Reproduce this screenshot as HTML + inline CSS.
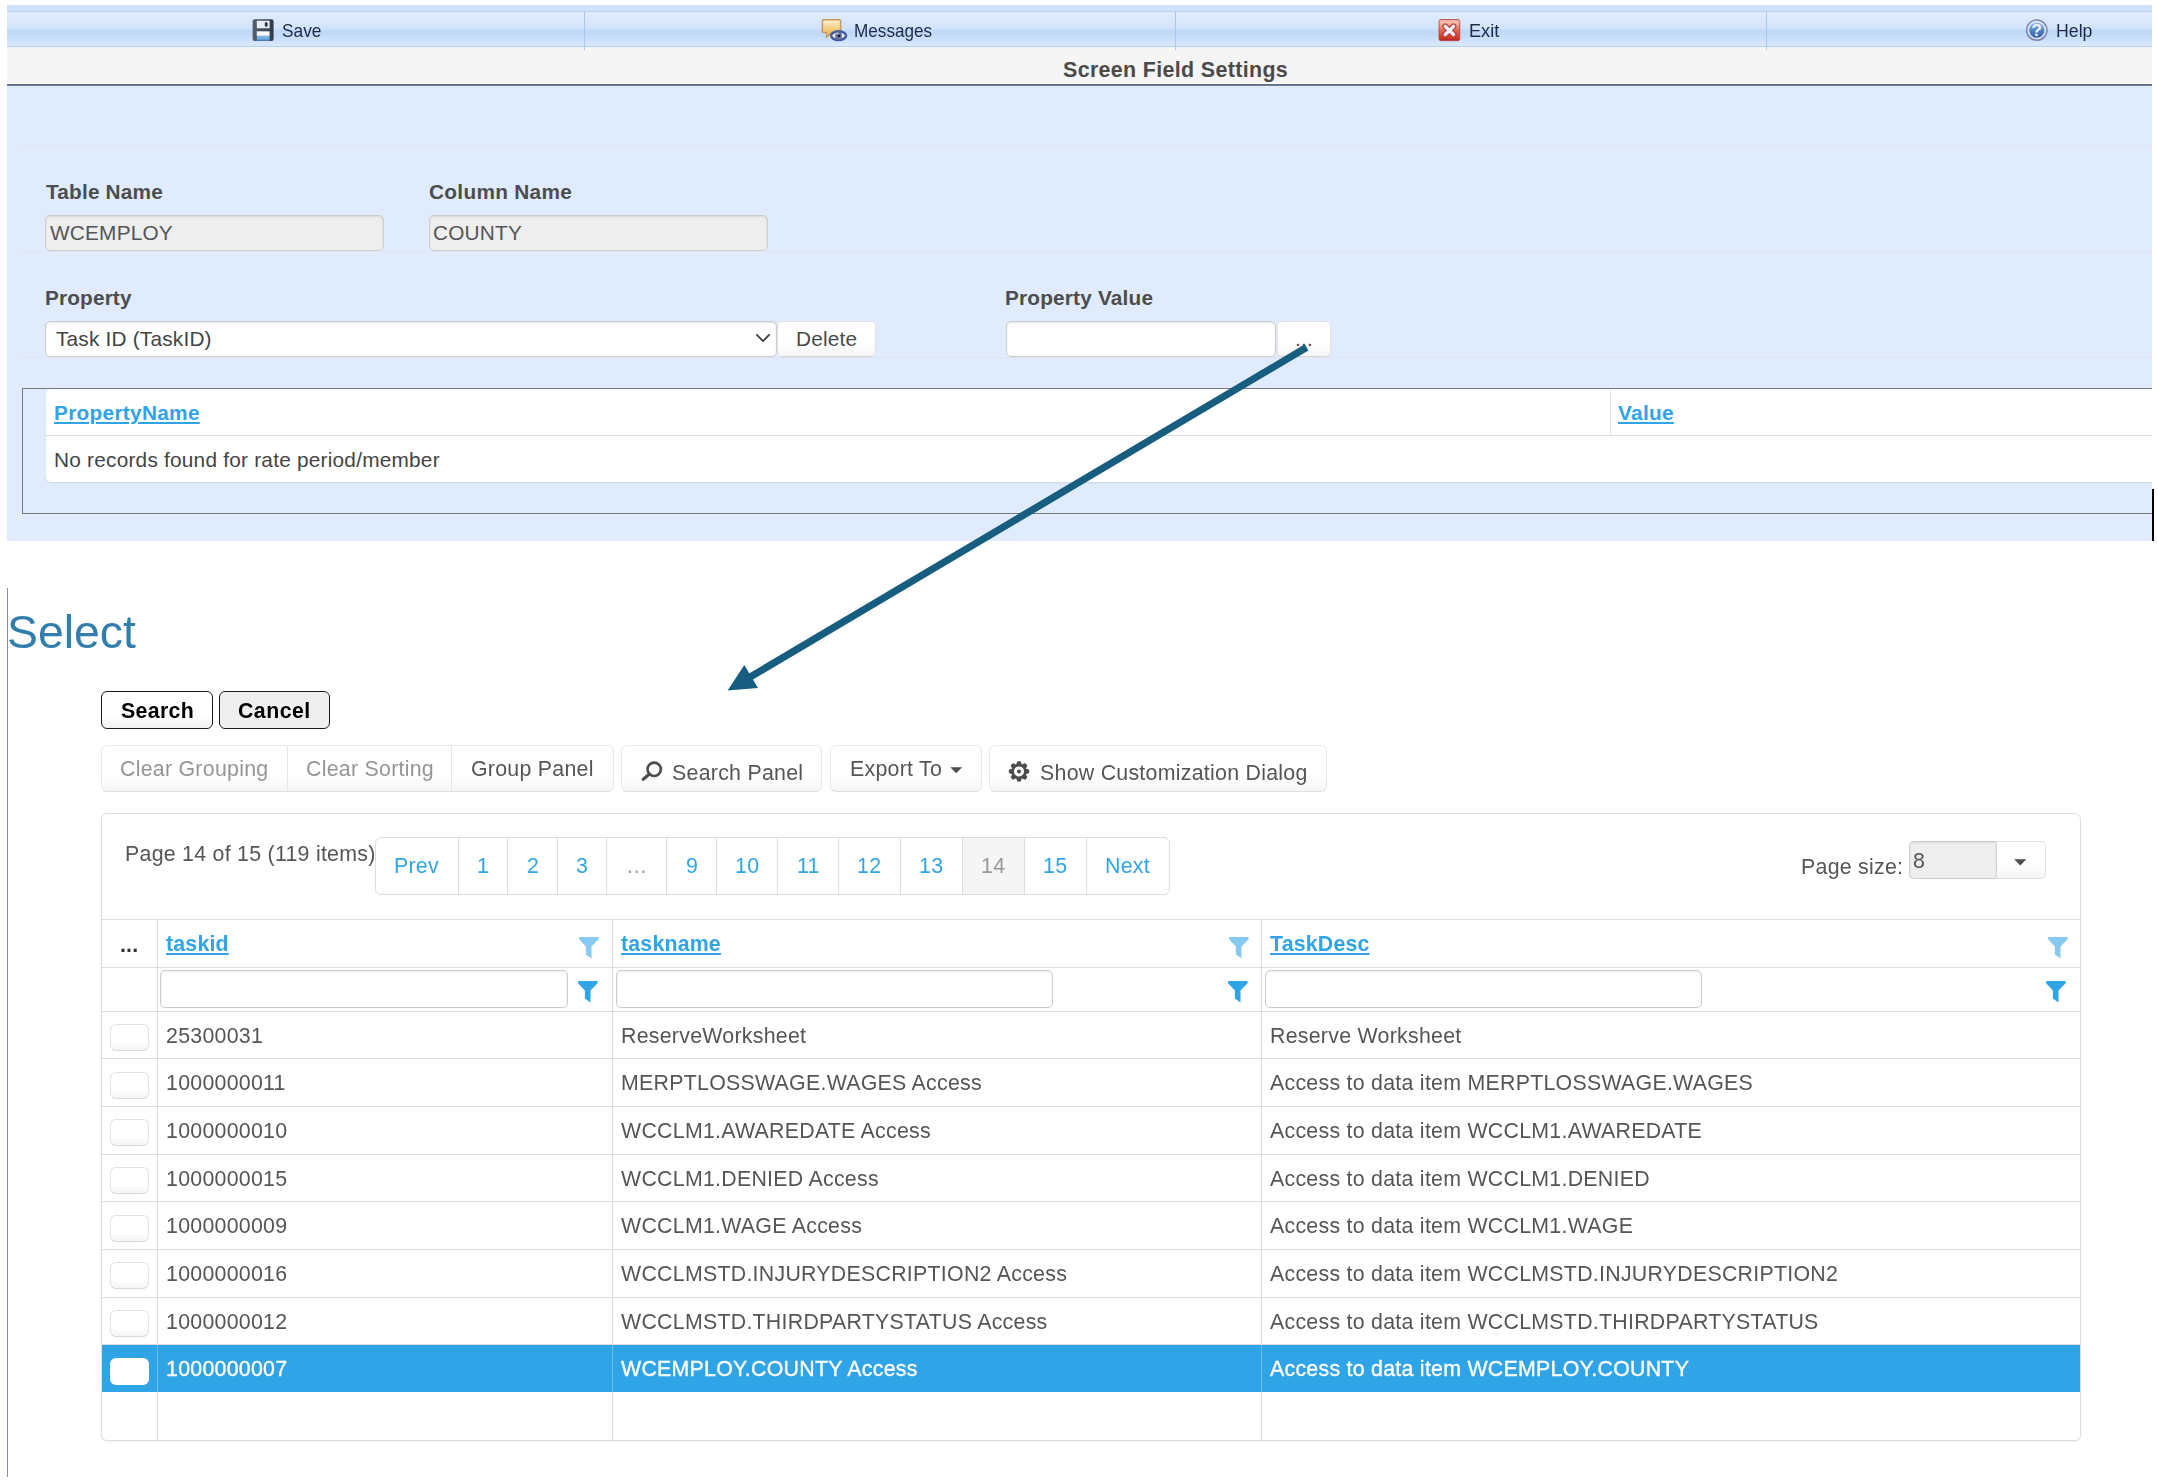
<!DOCTYPE html><html><head><meta charset="utf-8"><title>Screen Field Settings</title><style>
html,body{margin:0;padding:0;background:#fff;}
html{overflow:hidden;width:2157px;height:1480px;}
body{width:2157px;height:1480px;position:relative;overflow:hidden;font-family:"Liberation Sans",sans-serif;}
div{position:absolute;box-sizing:border-box;}
.t{white-space:nowrap;}
svg{position:absolute;overflow:visible;}
.u{text-decoration:underline;text-decoration-thickness:1.6px;text-underline-offset:2.2px;}
</style></head><body>
<div style="left:7px;top:5px;width:2145px;height:6px;background:#cfe2fb;"></div>
<div style="left:7px;top:11px;width:2145px;height:1px;background:#b6d1f5;"></div>
<div style="left:7px;top:12px;width:2145px;height:34px;background:linear-gradient(to bottom,#e1edfd 0%,#dae8fc 25%,#d0e3fb 50%,#bfd9f7 53%,#c1daf8 65%,#d0e2fa 85%,#dbe9fc 100%);"></div>
<div style="left:7px;top:46px;width:2145px;height:1px;background:#b4d0f4;"></div>
<div style="left:7px;top:47px;width:2145px;height:37px;background:#f5f5f5;"></div>
<div style="left:7px;top:83px;width:2145px;height:1px;background:#fdfdfd;"></div>
<div style="left:7px;top:84px;width:2145px;height:2px;background:linear-gradient(to bottom,#4f6179,#7b8fa6);"></div>
<div style="left:7px;top:86px;width:2145px;height:455px;background:#e0ecfd;"></div>
<div style="left:584px;top:12px;width:1px;height:38px;background:#a9c8f0;"></div>
<div style="left:1175px;top:12px;width:1px;height:38px;background:#a9c8f0;"></div>
<div style="left:1766px;top:12px;width:1px;height:38px;background:#a9c8f0;"></div>
<svg style="left:252px;top:19px" width="22" height="22" viewBox="0 0 22 22">
<defs><linearGradient id="sv1" x1="0" y1="0" x2="1" y2="0"><stop offset="0" stop-color="#566170"/><stop offset="0.25" stop-color="#4a5565"/><stop offset="1" stop-color="#2f3a4b"/></linearGradient>
<linearGradient id="sv2" x1="0" y1="0" x2="0" y2="1"><stop offset="0" stop-color="#86bce6"/><stop offset="0.6" stop-color="#6ca8dc"/><stop offset="1" stop-color="#4a78bf"/></linearGradient></defs>
<rect x="0.6" y="0.3" width="21" height="21.6" rx="2.2" fill="url(#sv1)"/>
<rect x="4.8" y="1.7" width="12.8" height="7.6" fill="#e9edf6"/>
<rect x="12.8" y="3.2" width="2.8" height="4.6" rx="1.2" fill="#2b303c"/>
<rect x="4.8" y="12.3" width="12.8" height="4.6" fill="#f8f9fc"/>
<rect x="4.8" y="16.8" width="12.8" height="5.1" fill="url(#sv2)"/>
</svg>
<div class="t" style="left:282px;top:22px;font-size:18.6px;line-height:18.6px;height:18.6px;color:#1e2b45;transform:scaleX(0.93);transform-origin:0 0;">Save</div>
<svg style="left:822px;top:19px" width="26" height="23" viewBox="0 0 26 23">
<defs><linearGradient id="mg1" x1="0" y1="0" x2="0" y2="1"><stop offset="0" stop-color="#fef3d8"/><stop offset="0.5" stop-color="#f2cd7c"/><stop offset="1" stop-color="#ecbb58"/></linearGradient>
<radialGradient id="mg2" cx="0.5" cy="0.5" r="0.5"><stop offset="0" stop-color="#20242c"/><stop offset="0.22" stop-color="#5a6a8c"/><stop offset="0.45" stop-color="#e8ebf4"/><stop offset="0.7" stop-color="#8f9cc6"/><stop offset="1" stop-color="#40539a"/></radialGradient></defs>
<path d="M1.6 0.8 H17.4 Q18.6 0.8 18.6 2 V12.4 Q18.6 13.6 17.4 13.6 H9.5 L4.6 18.2 V13.6 H1.6 Q0.4 13.6 0.4 12.4 V2 Q0.4 0.8 1.6 0.8 Z" fill="url(#mg1)" stroke="#c9995a" stroke-width="1.5"/>
<g style="filter:blur(0.45px)"><ellipse cx="16.6" cy="16.7" rx="8.6" ry="5.6" fill="#44569e"/>
<ellipse cx="16.6" cy="16.6" rx="6.2" ry="3.1" fill="#e6e9f3"/>
<ellipse cx="16.6" cy="16.7" rx="3.3" ry="4.5" fill="#5f6f92"/>
<ellipse cx="15.4" cy="14.6" rx="1.4" ry="1.0" fill="#a7c3d2"/>
<circle cx="16.9" cy="16.9" r="1.15" fill="#12151b"/></g>
</svg>
<div class="t" style="left:854px;top:22px;font-size:18.6px;line-height:18.6px;height:18.6px;color:#1e2b45;transform:scaleX(0.922);transform-origin:0 0;">Messages</div>
<svg style="left:1438px;top:19px" width="23" height="22" viewBox="0 0 23 22">
<defs><linearGradient id="ex1" x1="0" y1="0" x2="0" y2="1"><stop offset="0" stop-color="#e49a92"/><stop offset="0.12" stop-color="#f6c4b0"/><stop offset="0.5" stop-color="#e06850"/><stop offset="0.9" stop-color="#cf3424"/><stop offset="1" stop-color="#a8202a"/></linearGradient></defs>
<rect x="1.0" y="0.5" width="20.8" height="21.2" rx="2" fill="url(#ex1)" stroke="#c0403c" stroke-width="0.8"/>
<path d="M7.3 7.3 L15.5 15.5 M15.5 7.3 L7.3 15.5" stroke="#b84040" stroke-width="5.8" stroke-linecap="round"/>
<path d="M7.3 7.3 L15.5 15.5 M15.5 7.3 L7.3 15.5" stroke="#eef0f8" stroke-width="3.3" stroke-linecap="round"/>
</svg>
<div class="t" style="left:1469px;top:22px;font-size:18.6px;line-height:18.6px;height:18.6px;color:#1e2b45;transform:scaleX(0.975);transform-origin:0 0;">Exit</div>
<svg style="left:2025px;top:19px" width="23" height="23" viewBox="0 0 23 23">
<defs><linearGradient id="hp1" x1="0" y1="0" x2="0" y2="1"><stop offset="0" stop-color="#9cc4e6"/><stop offset="0.5" stop-color="#5486c8"/><stop offset="1" stop-color="#3558ae"/></linearGradient></defs>
<circle cx="11.8" cy="11.2" r="10.9" fill="#7d89b6"/>
<circle cx="11.8" cy="11.0" r="9.3" fill="#e3e8f5"/>
<circle cx="11.8" cy="11.1" r="7.7" fill="url(#hp1)"/>
<text x="11.8" y="17.2" text-anchor="middle" font-family="Liberation Sans" font-weight="700" font-size="17" fill="#f2f4fc">?</text>
</svg>
<div class="t" style="left:2056px;top:22px;font-size:18.6px;line-height:18.6px;height:18.6px;color:#1e2b45;transform:scaleX(0.952);transform-origin:0 0;">Help</div>
<div class="t" style="left:1063px;top:60px;font-size:21.4px;line-height:21.4px;height:21.4px;color:#4a4a4a;font-weight:700;letter-spacing:0.360px;">Screen Field Settings</div>
<div style="left:22px;top:145px;width:2130px;height:1px;background:#dbe5f3;"></div>
<div style="left:22px;top:251px;width:2130px;height:1px;background:#dbe5f3;"></div>
<div style="left:22px;top:357px;width:2130px;height:1px;background:#dbe5f3;"></div>
<div class="t" style="left:46px;top:182px;font-size:20.8px;line-height:20.8px;height:20.8px;color:#4d4d4d;font-weight:700;letter-spacing:0.170px;">Table Name</div>
<div class="t" style="left:429px;top:182px;font-size:20.8px;line-height:20.8px;height:20.8px;color:#4d4d4d;font-weight:700;letter-spacing:0.300px;">Column Name</div>
<div style="left:45px;top:215px;width:339px;height:36px;border:1px solid #ccc;border-radius:5px;box-shadow:inset 0 1px 2px rgba(0,0,0,.10);background:#eee;"></div>
<div class="t" style="left:50px;top:223px;font-size:20.8px;line-height:20.8px;height:20.8px;color:#555;letter-spacing:0.200px;">WCEMPLOY</div>
<div style="left:429px;top:215px;width:339px;height:36px;border:1px solid #ccc;border-radius:5px;box-shadow:inset 0 1px 2px rgba(0,0,0,.10);background:#eee;"></div>
<div class="t" style="left:433px;top:223px;font-size:20.8px;line-height:20.8px;height:20.8px;color:#555;letter-spacing:0.200px;">COUNTY</div>
<div class="t" style="left:45px;top:288px;font-size:20.8px;line-height:20.8px;height:20.8px;color:#4d4d4d;font-weight:700;letter-spacing:0.140px;">Property</div>
<div style="left:45px;top:321px;width:732px;height:36px;border:1px solid #ccc;border-radius:5px;box-shadow:inset 0 1px 2px rgba(0,0,0,.10);background:#fff;"></div>
<div class="t" style="left:56px;top:329px;font-size:20.8px;line-height:20.8px;height:20.8px;color:#444;letter-spacing:0.200px;">Task ID (TaskID)</div>
<svg style="left:755px;top:333px" width="17" height="11" viewBox="0 0 17 11"><path d="M1.9 1.9 L8.0 8.2 L14.1 1.9" fill="none" stroke="#3c3c3c" stroke-width="1.7" stroke-linecap="round" stroke-linejoin="round"/></svg>
<div style="left:777px;top:321px;width:99px;height:36px;border:1px solid #e2e2e2;border-bottom-color:#d6d6d6;border-radius:5px;background:linear-gradient(to bottom,#fff 0%,#fff 60%,#f5f5f5 100%);"></div>
<div class="t" style="left:796px;top:329px;font-size:20.8px;line-height:20.8px;height:20.8px;color:#4a4a4a;letter-spacing:0.200px;">Delete</div>
<div class="t" style="left:1005px;top:288px;font-size:20.8px;line-height:20.8px;height:20.8px;color:#4d4d4d;font-weight:700;letter-spacing:0.180px;">Property Value</div>
<div style="left:1006px;top:321px;width:270px;height:36px;border:1px solid #ccc;border-radius:5px;box-shadow:inset 0 1px 2px rgba(0,0,0,.10);background:#fff;"></div>
<div style="left:1277px;top:321px;width:54px;height:36px;border:1px solid #e2e2e2;border-bottom-color:#d6d6d6;border-radius:5px;background:linear-gradient(to bottom,#fff 0%,#fff 60%,#f5f5f5 100%);"></div>
<div class="t" style="left:1295px;top:329px;font-size:20.8px;line-height:20.8px;height:20.8px;color:#4a4a4a;letter-spacing:0.200px;">...</div>
<div style="left:22px;top:388px;width:2135px;height:126px;border:1px solid #7a7a7a;border-right:none;"></div>
<div style="left:46px;top:389px;width:2111px;height:93px;background:#fff;border-radius:5px 0 0 5px;box-shadow:0 1px 2px rgba(0,0,0,.10);"></div>
<div style="left:46px;top:435px;width:2106px;height:1px;background:#ddd;"></div>
<div style="left:1610px;top:390px;width:1px;height:45px;background:#e4e4e4;"></div>
<div class="t u" style="left:54px;top:403px;font-size:20.8px;line-height:20.8px;height:20.8px;color:#2fa4e7;font-weight:700;letter-spacing:0.300px;">PropertyName</div>
<div class="t u" style="left:1618px;top:403px;font-size:20.8px;line-height:20.8px;height:20.8px;color:#2fa4e7;font-weight:700;letter-spacing:0.300px;">Value</div>
<div class="t" style="left:54px;top:450px;font-size:20.8px;line-height:20.8px;height:20.8px;color:#444;letter-spacing:0.230px;">No records found for rate period/member</div>
<div style="left:2152px;top:0px;width:5px;height:1480px;background:#fff;"></div>
<div style="left:2152px;top:489px;width:2px;height:52px;background:#000;"></div>
<div id="bt" style="left:0;top:0;width:2157px;height:1480px;will-change:transform;">
<div style="left:7px;top:588px;width:1px;height:889px;background:#8a8f9c;"></div>
<div class="t" style="left:7px;top:609px;font-size:46.4px;line-height:46.4px;height:46.4px;color:#317eac;">Select</div>
<div style="left:101px;top:691px;width:112px;height:38px;border:1px solid #1c1c1c;border-radius:6px;background:linear-gradient(to bottom,#fff 0%,#fff 65%,#f1f1f1 100%);"></div>
<div class="t" style="left:121px;top:701px;font-size:21.33px;line-height:21.33px;height:21.33px;color:#000;font-weight:700;letter-spacing:0.330px;">Search</div>
<div style="left:219px;top:691px;width:111px;height:38px;border:1px solid #1c1c1c;border-radius:6px;background:#efefef;"></div>
<div class="t" style="left:238px;top:701px;font-size:21.33px;line-height:21.33px;height:21.33px;color:#000;font-weight:700;letter-spacing:0.450px;">Cancel</div>
<div style="left:101px;top:745px;width:513px;height:47px;border:1px solid #e8e8e8;border-bottom-color:#dfdfdf;background:linear-gradient(to bottom,#fff 0%,#fff 60%,#f6f6f6 100%);border-radius:6px;"></div>
<div style="left:287px;top:746px;width:1px;height:45px;background:#e6e6e6;"></div>
<div style="left:451px;top:746px;width:1px;height:45px;background:#e6e6e6;"></div>
<div class="t" style="left:120px;top:759px;font-size:21.33px;line-height:21.33px;height:21.33px;color:#959595;letter-spacing:0.270px;">Clear Grouping</div>
<div class="t" style="left:306px;top:759px;font-size:21.33px;line-height:21.33px;height:21.33px;color:#959595;letter-spacing:0.270px;">Clear Sorting</div>
<div class="t" style="left:471px;top:759px;font-size:21.33px;line-height:21.33px;height:21.33px;color:#555;letter-spacing:0.270px;">Group Panel</div>
<div style="left:621px;top:745px;width:201px;height:47px;border:1px solid #e8e8e8;border-bottom-color:#dfdfdf;background:linear-gradient(to bottom,#fff 0%,#fff 60%,#f6f6f6 100%);border-radius:6px;"></div>
<svg style="left:641px;top:761px" width="22" height="21" viewBox="0 0 22 21"><circle cx="13.2" cy="8.3" r="6.7" fill="none" stroke="#4c4c4c" stroke-width="2.6"/><path d="M8.2 13.3 L2.2 18.3" stroke="#4c4c4c" stroke-width="3.1" stroke-linecap="round"/></svg>
<div class="t" style="left:672px;top:763px;font-size:21.33px;line-height:21.33px;height:21.33px;color:#555;letter-spacing:0.270px;">Search Panel</div>
<div style="left:830px;top:745px;width:152px;height:47px;border:1px solid #e8e8e8;border-bottom-color:#dfdfdf;background:linear-gradient(to bottom,#fff 0%,#fff 60%,#f6f6f6 100%);border-radius:6px;"></div>
<div class="t" style="left:850px;top:759px;font-size:21.33px;line-height:21.33px;height:21.33px;color:#555;letter-spacing:0.270px;">Export To</div>
<svg style="left:950px;top:767px" width="13" height="7" viewBox="0 0 13 7"><path d="M0.3 0.3 H12.1 L6.2 6.2 Z" fill="#4d4d4d"/></svg>
<div style="left:989px;top:745px;width:338px;height:47px;border:1px solid #e8e8e8;border-bottom-color:#dfdfdf;background:linear-gradient(to bottom,#fff 0%,#fff 60%,#f6f6f6 100%);border-radius:6px;"></div>
<svg style="left:1008px;top:761px" width="22" height="21" viewBox="-11 -10.4 22 21"><polygon points="-2.41,-5.82 -1.16,-9.43 1.16,-9.43 2.41,-5.82 5.85,-7.49 7.49,-5.85 5.82,-2.41 9.43,-1.16 9.43,1.16 5.82,2.41 7.49,5.85 5.85,7.49 2.41,5.82 1.16,9.43 -1.16,9.43 -2.41,5.82 -5.85,7.49 -7.49,5.85 -5.82,2.41 -9.43,1.16 -9.43,-1.16 -5.82,-2.41 -7.49,-5.85 -5.85,-7.49" fill="#4c4c4c" stroke="#4c4c4c" stroke-width="1.5" stroke-linejoin="round"/><circle r="5.0" fill="#fff"/><circle r="2.0" fill="#4c4c4c"/></svg>
<div class="t" style="left:1040px;top:763px;font-size:21.33px;line-height:21.33px;height:21.33px;color:#555;letter-spacing:0.270px;">Show Customization Dialog</div>
<div style="left:101px;top:813px;width:1980px;height:628px;border:1px solid #ddd;border-radius:6px;background:#fff;box-shadow:0 1px 2px rgba(0,0,0,.06);"></div>
<div class="t" style="left:125px;top:844px;font-size:21.33px;line-height:21.33px;height:21.33px;color:#555;letter-spacing:0.270px;">Page 14 of 15 (119 items)</div>
<div style="left:375px;top:837px;width:795px;height:58px;border:1px solid #ddd;border-radius:6px;background:#fff;"></div>
<div style="left:963px;top:838px;width:62px;height:56px;background:#f5f5f5;"></div>
<div style="left:458px;top:838px;width:1px;height:56px;background:#ddd;"></div>
<div style="left:507px;top:838px;width:1px;height:56px;background:#ddd;"></div>
<div style="left:557px;top:838px;width:1px;height:56px;background:#ddd;"></div>
<div style="left:606px;top:838px;width:1px;height:56px;background:#ddd;"></div>
<div style="left:666px;top:838px;width:1px;height:56px;background:#ddd;"></div>
<div style="left:716px;top:838px;width:1px;height:56px;background:#ddd;"></div>
<div style="left:777px;top:838px;width:1px;height:56px;background:#ddd;"></div>
<div style="left:838px;top:838px;width:1px;height:56px;background:#ddd;"></div>
<div style="left:900px;top:838px;width:1px;height:56px;background:#ddd;"></div>
<div style="left:962px;top:838px;width:1px;height:56px;background:#ddd;"></div>
<div style="left:1024px;top:838px;width:1px;height:56px;background:#ddd;"></div>
<div style="left:1086px;top:838px;width:1px;height:56px;background:#ddd;"></div>
<div class="t" style="left:394px;top:856px;font-size:21.33px;line-height:21.33px;height:21.33px;color:#2fa4e7;letter-spacing:0.270px;">Prev</div>
<div class="t" style="left:477px;top:856px;font-size:21.33px;line-height:21.33px;height:21.33px;color:#2fa4e7;letter-spacing:0.270px;">1</div>
<div class="t" style="left:527px;top:856px;font-size:21.33px;line-height:21.33px;height:21.33px;color:#2fa4e7;letter-spacing:0.270px;">2</div>
<div class="t" style="left:576px;top:856px;font-size:21.33px;line-height:21.33px;height:21.33px;color:#2fa4e7;letter-spacing:0.270px;">3</div>
<div class="t" style="left:626px;top:856px;font-size:21.33px;line-height:21.33px;height:21.33px;color:#999;letter-spacing:0.270px;">…</div>
<div class="t" style="left:686px;top:856px;font-size:21.33px;line-height:21.33px;height:21.33px;color:#2fa4e7;letter-spacing:0.270px;">9</div>
<div class="t" style="left:735px;top:856px;font-size:21.33px;line-height:21.33px;height:21.33px;color:#2fa4e7;letter-spacing:0.270px;">10</div>
<div class="t" style="left:797px;top:856px;font-size:21.33px;line-height:21.33px;height:21.33px;color:#2fa4e7;letter-spacing:0.270px;">11</div>
<div class="t" style="left:857px;top:856px;font-size:21.33px;line-height:21.33px;height:21.33px;color:#2fa4e7;letter-spacing:0.270px;">12</div>
<div class="t" style="left:919px;top:856px;font-size:21.33px;line-height:21.33px;height:21.33px;color:#2fa4e7;letter-spacing:0.270px;">13</div>
<div class="t" style="left:981px;top:856px;font-size:21.33px;line-height:21.33px;height:21.33px;color:#999;letter-spacing:0.270px;">14</div>
<div class="t" style="left:1043px;top:856px;font-size:21.33px;line-height:21.33px;height:21.33px;color:#2fa4e7;letter-spacing:0.270px;">15</div>
<div class="t" style="left:1105px;top:856px;font-size:21.33px;line-height:21.33px;height:21.33px;color:#2fa4e7;letter-spacing:0.270px;">Next</div>
<div class="t" style="left:1801px;top:857px;font-size:21.33px;line-height:21.33px;height:21.33px;color:#555;letter-spacing:0.270px;">Page size:</div>
<div style="left:1909px;top:841px;width:87px;height:38px;border:1px solid #ccc;border-right:none;border-radius:5px 0 0 5px;background:#eee;box-shadow:inset 0 1px 2px rgba(0,0,0,.08);"></div>
<div class="t" style="left:1913px;top:851px;font-size:21.33px;line-height:21.33px;height:21.33px;color:#555;letter-spacing:0.270px;">8</div>
<div style="left:1996px;top:841px;width:50px;height:38px;border:1px solid #e0e0e0;border-left:1px solid #d4d4d4;border-radius:0 5px 5px 0;background:linear-gradient(to bottom,#fff 0%,#fff 60%,#f5f5f5 100%);"></div>
<svg style="left:2014px;top:859px" width="13" height="7" viewBox="0 0 13 7"><path d="M0.2 0.2 H12.4 L6.3 6.4 Z" fill="#4d4d4d"/></svg>
<div style="left:102px;top:919px;width:1978px;height:1px;background:#ddd;"></div>
<div style="left:102px;top:967px;width:1978px;height:1px;background:#ddd;"></div>
<div style="left:102px;top:1011px;width:1978px;height:1px;background:#ddd;"></div>
<div style="left:102px;top:1345px;width:1978px;height:47px;background:#2fa4e7;"></div>
<div style="left:102px;top:1058px;width:1978px;height:1px;background:#ddd;"></div>
<div style="left:102px;top:1106px;width:1978px;height:1px;background:#ddd;"></div>
<div style="left:102px;top:1154px;width:1978px;height:1px;background:#ddd;"></div>
<div style="left:102px;top:1201px;width:1978px;height:1px;background:#ddd;"></div>
<div style="left:102px;top:1249px;width:1978px;height:1px;background:#ddd;"></div>
<div style="left:102px;top:1297px;width:1978px;height:1px;background:#ddd;"></div>
<div style="left:102px;top:1344px;width:1978px;height:1px;background:#ddd;"></div>
<div style="left:157px;top:920px;width:1px;height:520px;background:#ddd;"></div>
<div style="left:157px;top:1345px;width:1px;height:47px;background:#6dbfee;"></div>
<div style="left:612px;top:920px;width:1px;height:520px;background:#ddd;"></div>
<div style="left:612px;top:1345px;width:1px;height:47px;background:#6dbfee;"></div>
<div style="left:1261px;top:920px;width:1px;height:520px;background:#ddd;"></div>
<div style="left:1261px;top:1345px;width:1px;height:47px;background:#6dbfee;"></div>
<div class="t" style="left:120px;top:935px;font-size:21.33px;line-height:21.33px;height:21.33px;color:#333;font-weight:700;letter-spacing:0.189px;">...</div>
<div class="t u" style="left:166px;top:934px;font-size:21.33px;line-height:21.33px;height:21.33px;color:#2fa4e7;font-weight:700;letter-spacing:0.189px;">taskid</div>
<div class="t u" style="left:621px;top:934px;font-size:21.33px;line-height:21.33px;height:21.33px;color:#2fa4e7;font-weight:700;letter-spacing:0.189px;">taskname</div>
<div class="t u" style="left:1270px;top:934px;font-size:21.33px;line-height:21.33px;height:21.33px;color:#2fa4e7;font-weight:700;letter-spacing:0.189px;">TaskDesc</div>
<svg style="left:579.2px;top:937.2px" width="20" height="22" viewBox="0 0 20 22"><path d="M0.9 0 H18.9 Q19.6 0 19.6 0.7 V2.3 L12.5 9.4 V21.5 L6.9 17.6 V9.4 L0.1 2.3 V0.7 Q0.1 0 0.9 0 Z" fill="#86c9f1"/></svg>
<svg style="left:1228.8px;top:937.2px" width="20" height="22" viewBox="0 0 20 22"><path d="M0.9 0 H18.9 Q19.6 0 19.6 0.7 V2.3 L12.5 9.4 V21.5 L6.9 17.6 V9.4 L0.1 2.3 V0.7 Q0.1 0 0.9 0 Z" fill="#86c9f1"/></svg>
<svg style="left:2047.6px;top:937.2px" width="20" height="22" viewBox="0 0 20 22"><path d="M0.9 0 H18.9 Q19.6 0 19.6 0.7 V2.3 L12.5 9.4 V21.5 L6.9 17.6 V9.4 L0.1 2.3 V0.7 Q0.1 0 0.9 0 Z" fill="#86c9f1"/></svg>
<svg style="left:578.3px;top:981.2px" width="20" height="22" viewBox="0 0 20 22"><path d="M0.9 0 H18.9 Q19.6 0 19.6 0.7 V2.3 L12.5 9.4 V21.5 L6.9 17.6 V9.4 L0.1 2.3 V0.7 Q0.1 0 0.9 0 Z" fill="#2fa4e7"/></svg>
<svg style="left:1227.5px;top:981.2px" width="20" height="22" viewBox="0 0 20 22"><path d="M0.9 0 H18.9 Q19.6 0 19.6 0.7 V2.3 L12.5 9.4 V21.5 L6.9 17.6 V9.4 L0.1 2.3 V0.7 Q0.1 0 0.9 0 Z" fill="#2fa4e7"/></svg>
<svg style="left:2046.4px;top:981.2px" width="20" height="22" viewBox="0 0 20 22"><path d="M0.9 0 H18.9 Q19.6 0 19.6 0.7 V2.3 L12.5 9.4 V21.5 L6.9 17.6 V9.4 L0.1 2.3 V0.7 Q0.1 0 0.9 0 Z" fill="#2fa4e7"/></svg>
<div style="left:160px;top:970px;width:408px;height:38px;border:1px solid #ccc;border-radius:5px;background:#fff;box-shadow:inset 0 1px 2px rgba(0,0,0,.08);"></div>
<div style="left:616px;top:970px;width:437px;height:38px;border:1px solid #ccc;border-radius:5px;background:#fff;box-shadow:inset 0 1px 2px rgba(0,0,0,.08);"></div>
<div style="left:1265px;top:970px;width:437px;height:38px;border:1px solid #ccc;border-radius:5px;background:#fff;box-shadow:inset 0 1px 2px rgba(0,0,0,.08);"></div>
<div class="t" style="left:166px;top:1026px;font-size:21.33px;line-height:21.33px;height:21.33px;color:#555;letter-spacing:0.270px;">25300031</div>
<div class="t" style="left:621px;top:1026px;font-size:21.33px;line-height:21.33px;height:21.33px;color:#555;letter-spacing:0.270px;">ReserveWorksheet</div>
<div class="t" style="left:1270px;top:1026px;font-size:21.33px;line-height:21.33px;height:21.33px;color:#555;letter-spacing:0.270px;">Reserve Worksheet</div>
<div style="left:110px;top:1024px;width:39px;height:27px;border:1px solid #e2e2e2;border-bottom-color:#d8d8d8;border-radius:6px;background:linear-gradient(to bottom,#fff 0%,#fff 60%,#f5f5f5 100%);"></div>
<div class="t" style="left:166px;top:1073px;font-size:21.33px;line-height:21.33px;height:21.33px;color:#555;letter-spacing:0.270px;">1000000011</div>
<div class="t" style="left:621px;top:1073px;font-size:21.33px;line-height:21.33px;height:21.33px;color:#555;letter-spacing:0.270px;">MERPTLOSSWAGE.WAGES Access</div>
<div class="t" style="left:1270px;top:1073px;font-size:21.33px;line-height:21.33px;height:21.33px;color:#555;letter-spacing:0.270px;">Access to data item MERPTLOSSWAGE.WAGES</div>
<div style="left:110px;top:1072px;width:39px;height:27px;border:1px solid #e2e2e2;border-bottom-color:#d8d8d8;border-radius:6px;background:linear-gradient(to bottom,#fff 0%,#fff 60%,#f5f5f5 100%);"></div>
<div class="t" style="left:166px;top:1121px;font-size:21.33px;line-height:21.33px;height:21.33px;color:#555;letter-spacing:0.270px;">1000000010</div>
<div class="t" style="left:621px;top:1121px;font-size:21.33px;line-height:21.33px;height:21.33px;color:#555;letter-spacing:0.270px;">WCCLM1.AWAREDATE Access</div>
<div class="t" style="left:1270px;top:1121px;font-size:21.33px;line-height:21.33px;height:21.33px;color:#555;letter-spacing:0.270px;">Access to data item WCCLM1.AWAREDATE</div>
<div style="left:110px;top:1119px;width:39px;height:27px;border:1px solid #e2e2e2;border-bottom-color:#d8d8d8;border-radius:6px;background:linear-gradient(to bottom,#fff 0%,#fff 60%,#f5f5f5 100%);"></div>
<div class="t" style="left:166px;top:1169px;font-size:21.33px;line-height:21.33px;height:21.33px;color:#555;letter-spacing:0.270px;">1000000015</div>
<div class="t" style="left:621px;top:1169px;font-size:21.33px;line-height:21.33px;height:21.33px;color:#555;letter-spacing:0.270px;">WCCLM1.DENIED Access</div>
<div class="t" style="left:1270px;top:1169px;font-size:21.33px;line-height:21.33px;height:21.33px;color:#555;letter-spacing:0.270px;">Access to data item WCCLM1.DENIED</div>
<div style="left:110px;top:1167px;width:39px;height:27px;border:1px solid #e2e2e2;border-bottom-color:#d8d8d8;border-radius:6px;background:linear-gradient(to bottom,#fff 0%,#fff 60%,#f5f5f5 100%);"></div>
<div class="t" style="left:166px;top:1216px;font-size:21.33px;line-height:21.33px;height:21.33px;color:#555;letter-spacing:0.270px;">1000000009</div>
<div class="t" style="left:621px;top:1216px;font-size:21.33px;line-height:21.33px;height:21.33px;color:#555;letter-spacing:0.270px;">WCCLM1.WAGE Access</div>
<div class="t" style="left:1270px;top:1216px;font-size:21.33px;line-height:21.33px;height:21.33px;color:#555;letter-spacing:0.270px;">Access to data item WCCLM1.WAGE</div>
<div style="left:110px;top:1215px;width:39px;height:27px;border:1px solid #e2e2e2;border-bottom-color:#d8d8d8;border-radius:6px;background:linear-gradient(to bottom,#fff 0%,#fff 60%,#f5f5f5 100%);"></div>
<div class="t" style="left:166px;top:1264px;font-size:21.33px;line-height:21.33px;height:21.33px;color:#555;letter-spacing:0.270px;">1000000016</div>
<div class="t" style="left:621px;top:1264px;font-size:21.33px;line-height:21.33px;height:21.33px;color:#555;letter-spacing:0.270px;">WCCLMSTD.INJURYDESCRIPTION2 Access</div>
<div class="t" style="left:1270px;top:1264px;font-size:21.33px;line-height:21.33px;height:21.33px;color:#555;letter-spacing:0.270px;">Access to data item WCCLMSTD.INJURYDESCRIPTION2</div>
<div style="left:110px;top:1262px;width:39px;height:27px;border:1px solid #e2e2e2;border-bottom-color:#d8d8d8;border-radius:6px;background:linear-gradient(to bottom,#fff 0%,#fff 60%,#f5f5f5 100%);"></div>
<div class="t" style="left:166px;top:1312px;font-size:21.33px;line-height:21.33px;height:21.33px;color:#555;letter-spacing:0.270px;">1000000012</div>
<div class="t" style="left:621px;top:1312px;font-size:21.33px;line-height:21.33px;height:21.33px;color:#555;letter-spacing:0.270px;">WCCLMSTD.THIRDPARTYSTATUS Access</div>
<div class="t" style="left:1270px;top:1312px;font-size:21.33px;line-height:21.33px;height:21.33px;color:#555;letter-spacing:0.270px;">Access to data item WCCLMSTD.THIRDPARTYSTATUS</div>
<div style="left:110px;top:1310px;width:39px;height:27px;border:1px solid #e2e2e2;border-bottom-color:#d8d8d8;border-radius:6px;background:linear-gradient(to bottom,#fff 0%,#fff 60%,#f5f5f5 100%);"></div>
<div class="t" style="left:166px;top:1359px;font-size:21.33px;line-height:21.33px;height:21.33px;color:#fff;letter-spacing:0.270px;-webkit-text-stroke:0.35px #fff;">1000000007</div>
<div class="t" style="left:621px;top:1359px;font-size:21.33px;line-height:21.33px;height:21.33px;color:#fff;letter-spacing:0.270px;-webkit-text-stroke:0.35px #fff;">WCEMPLOY.COUNTY Access</div>
<div class="t" style="left:1270px;top:1359px;font-size:21.33px;line-height:21.33px;height:21.33px;color:#fff;letter-spacing:0.270px;-webkit-text-stroke:0.35px #fff;">Access to data item WCEMPLOY.COUNTY</div>
<div style="left:110px;top:1358px;width:39px;height:27px;border-radius:6px;background:#fff;"></div>
</div>
<svg style="left:0;top:0" width="2157" height="1480" viewBox="0 0 2157 1480"><path d="M1306.6 347.4 L748.7 677.9" stroke="#165d80" stroke-width="7.2" fill="none"/><path d="M727.6 690.6 L744.3 665.1 L758 687.9 Z" fill="#165d80"/></svg>
<!--BOTTOM-->
</body></html>
